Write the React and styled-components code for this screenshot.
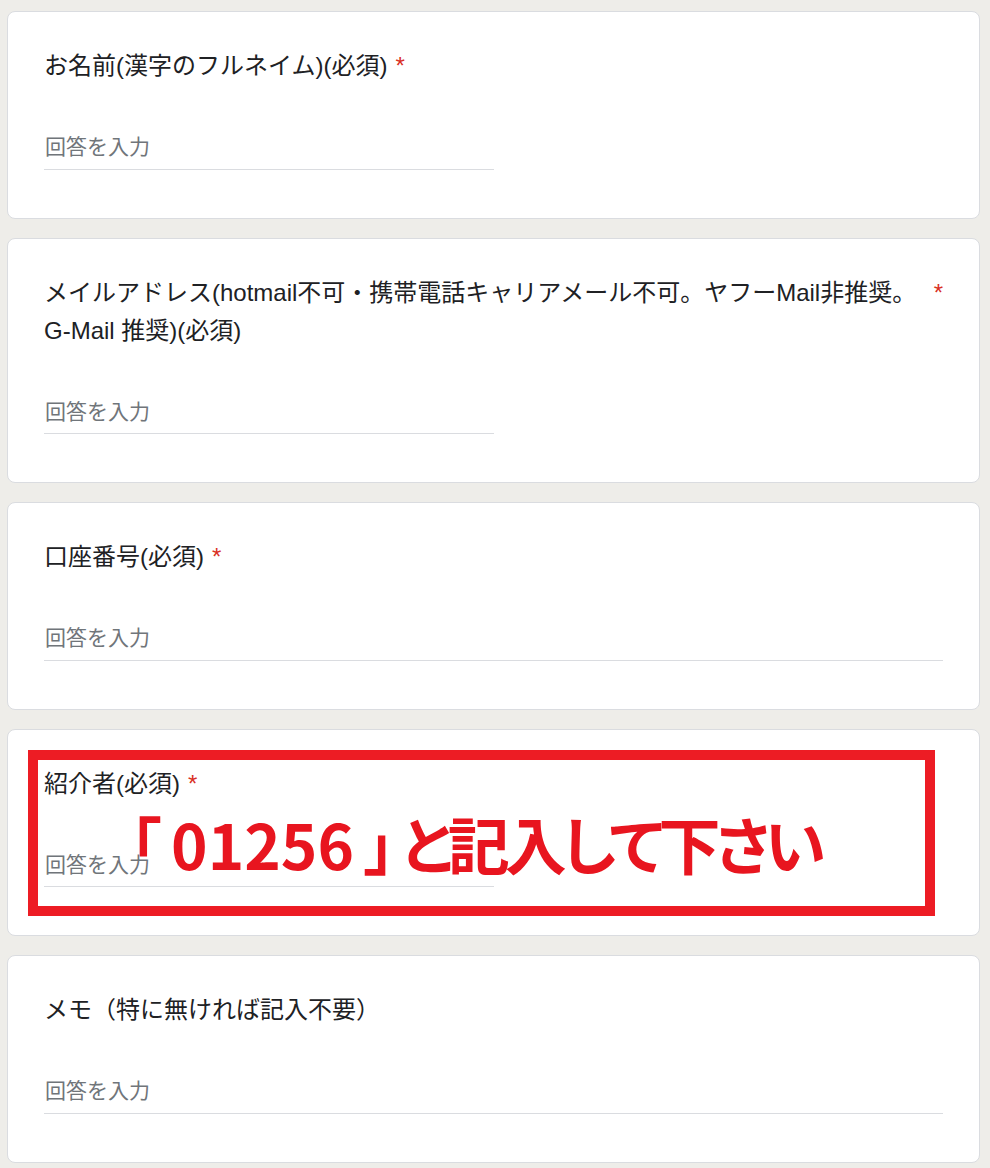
import React from 'react'
import styled, { createGlobalStyle } from 'styled-components'

const GlobalStyle = createGlobalStyle`
  body {
    margin: 0;
    background-color: #eeede9;
    font-family: "Liberation Sans", "Noto Sans CJK JP", sans-serif;
  }
`

const Page = styled.div`
  display: flex;
  flex-direction: column;
  gap: 19px;
  padding: 11px 10px 8px 7px;
`
const Card = styled.div`
  position: relative;
  background-color: #fff;
  border: 1px solid #dadce0;
  border-radius: 8px;
  padding: 35px 36px 48px 36px;
`
const TitleRow = styled.div`
  display: flex;
  align-items: flex-start;
  font-size: 24px;
  line-height: 38px;
  color: #202124;
`
const TitleText = styled.span`
  flex: 0 1 auto;
`
const NoBreak = styled.span`
  white-space: nowrap;
`
const Required = styled.span`
  flex: 0 0 auto;
  color: #d93025;
  padding-left: 8px;
`
const Answer = styled.input`
  display: block;
  box-sizing: border-box;
  width: ${props => (props.$wide ? '100%' : '450px')};
  margin: 47px 0 0 0;
  padding: 0 0 6px 1px;
  height: 37.5px;
  border: none;
  border-bottom: 1.5px solid #dadce0;
  outline: none;
  background: transparent;
  font-family: "Liberation Sans", "Noto Sans CJK JP", sans-serif;
  font-size: 21px;
  line-height: 30px;
  color: #202124;

  &::placeholder { color: #70757a; }
`
const Callout = styled.div`
  position: absolute;
  left: 20px;
  top: 20px;
  width: 907px;
  height: 166px;
  box-sizing: border-box;
  border: 10px solid #ed1c24;
  padding: 52px 0 0 92px;
  pointer-events: none;
`
const CalloutText = styled.div`
  font-family: "Noto Sans CJK JP", sans-serif;
  font-weight: 700;
  font-size: 62px;
  line-height: 62px;
  color: #e8151f;
  font-feature-settings: "palt";
  word-spacing: -4px;
  white-space: nowrap;
`
const Tight = styled.span`
  margin-left: 6px;
  letter-spacing: -5px;
`

const questions = [
  { id: 'name', title: 'お名前(漢字のフルネイム)(必須)', required: true },
  {
    id: 'mail',
    title: <>メイルアドレス(hotmail不可・携帯電話キャリアメール不可。ヤフーMail非推奨。<NoBreak>G-Mail</NoBreak> 推奨)(必須)</>,
    required: true
  },
  { id: 'account', title: '口座番号(必須)', required: true, wide: true },
  {
    id: 'referrer',
    title: '紹介者(必須)',
    required: true,
    note: <>「 01256 」<Tight>と記入して下さい</Tight></>
  },
  { id: 'memo', title: 'メモ（特に無ければ記入不要）', wide: true }
]

const Question = ({ title, required, wide, note }) => (
  <Card>
    <TitleRow>
      <TitleText>{title}</TitleText>
      {required && <Required>*</Required>}
    </TitleRow>
    <Answer $wide={wide} placeholder='回答を入力' />
    {note && (
      <Callout>
        <CalloutText>{note}</CalloutText>
      </Callout>
    )}
  </Card>
)

const App = () => (
  <>
    <GlobalStyle />
    <Page>
      {questions.map(({ id, ...q }) => <Question key={id} {...q} />)}
    </Page>
  </>
)

export default App
